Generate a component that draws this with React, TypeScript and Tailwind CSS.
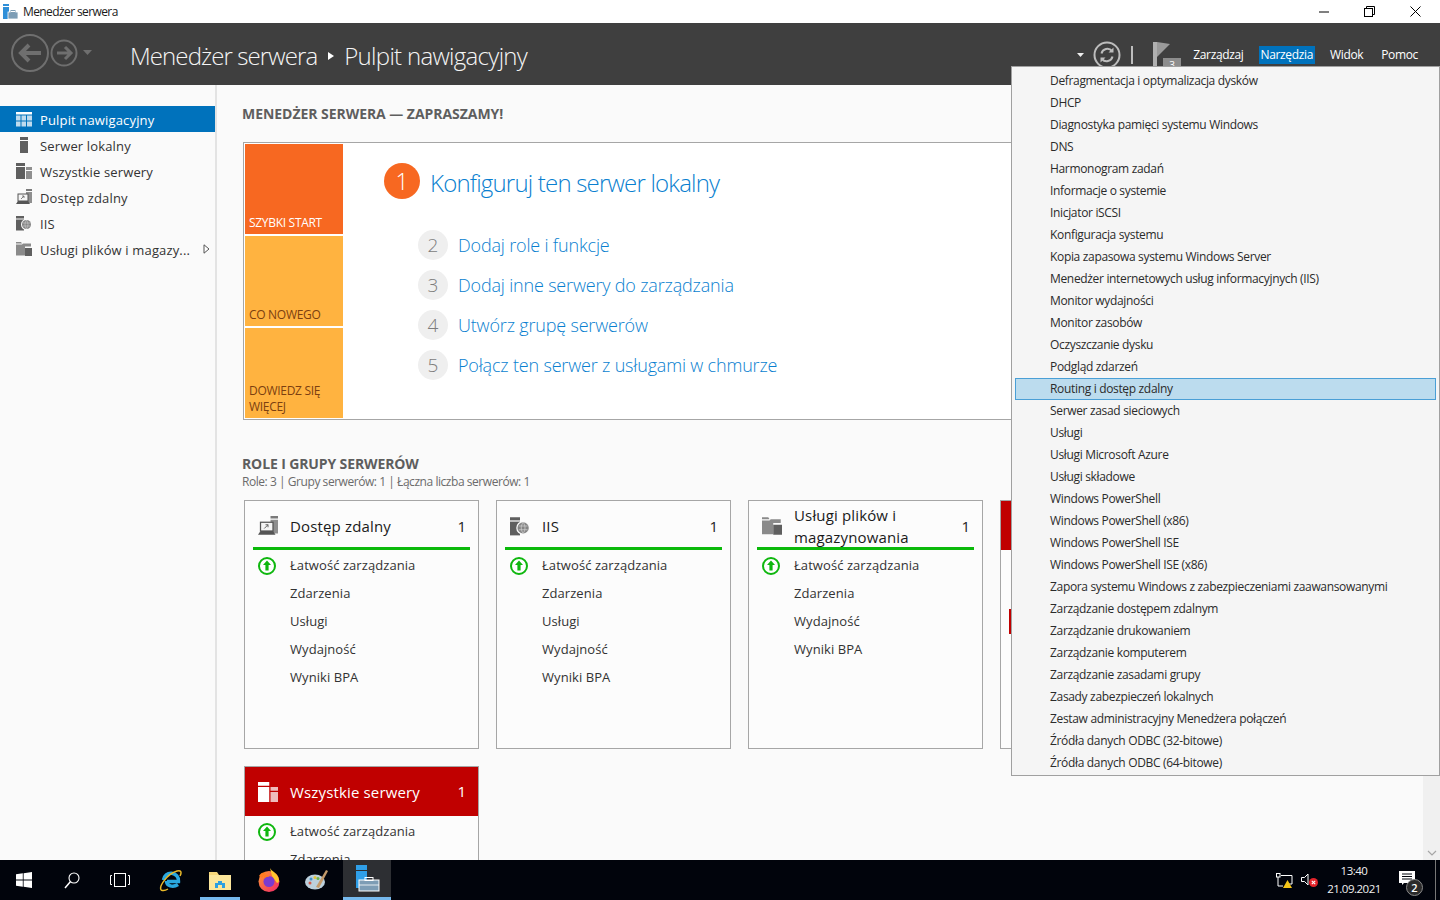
import { ReactNode } from 'react';

const menuItems = [
  'Defragmentacja i optymalizacja dysków',
  'DHCP',
  'Diagnostyka pamięci systemu Windows',
  'DNS',
  'Harmonogram zadań',
  'Informacje o systemie',
  'Inicjator iSCSI',
  'Konfiguracja systemu',
  'Kopia zapasowa systemu Windows Server',
  'Menedżer internetowych usług informacyjnych (IIS)',
  'Monitor wydajności',
  'Monitor zasobów',
  'Oczyszczanie dysku',
  'Podgląd zdarzeń',
  'Routing i dostęp zdalny',
  'Serwer zasad sieciowych',
  'Usługi',
  'Usługi Microsoft Azure',
  'Usługi składowe',
  'Windows PowerShell',
  'Windows PowerShell (x86)',
  'Windows PowerShell ISE',
  'Windows PowerShell ISE (x86)',
  'Zapora systemu Windows z zabezpieczeniami zaawansowanymi',
  'Zarządzanie dostępem zdalnym',
  'Zarządzanie drukowaniem',
  'Zarządzanie komputerem',
  'Zarządzanie zasadami grupy',
  'Zasady zabezpieczeń lokalnych',
  'Zestaw administracyjny Menedżera połączeń',
  'Źródła danych ODBC (32-bitowe)',
  'Źródła danych ODBC (64-bitowe)',
];

/* role icons */
function DashIcon() {
  return (
    <svg width="16" height="15" viewBox="0 0 16 15" fill="currentColor">
      <rect x="0" y="0" width="16" height="2.500" />
      <rect x="0" y="3.500" width="4.500" height="5" opacity=".75" />
      <rect x="5.500" y="3.500" width="4.500" height="5" opacity=".75" />
      <rect x="11" y="3.500" width="5" height="5" opacity=".75" />
      <rect x="0" y="9.500" width="4.500" height="5" opacity=".75" />
      <rect x="5.500" y="9.500" width="4.500" height="5" opacity=".75" />
      <rect x="11" y="9.500" width="5" height="5" opacity=".75" />
    </svg>
  );
}

function LocalIcon({ h = 16 }: { h?: number }) {
  return (
    <svg width={h / 2} height={h} viewBox="0 0 8 16" fill="#5f5f5f">
      <rect x="0" y="0" width="8" height="3" />
      <rect x="0" y="4" width="8" height="12" />
    </svg>
  );
}

function AllIcon({ main = '#5f5f5f', side = '#8f8f8f', size = 16 }: { main?: string; side?: string; size?: number }) {
  return (
    <svg width={size} height={size} viewBox="0 0 16 16">
      <rect x="0" y="0" width="9" height="3" fill={main} />
      <rect x="0" y="4" width="9" height="12" fill={main} />
      <rect x="10" y="4" width="6" height="3" fill={side} />
      <rect x="10" y="8" width="6" height="8" fill={side} />
    </svg>
  );
}

function RemoteIcon({ size = 16 }: { size?: number }) {
  return (
    <svg width={size} height={size} viewBox="0 0 16 16">
      <rect x="10" y="0" width="6" height="2" fill="#7a7a7a" />
      <rect x="10" y="3" width="6" height="11" fill="#8f8f8f" />
      <rect x="2" y="5" width="10" height="7" fill="#f5f5f5" stroke="#555" />
      <path d="M5 10l3-3M6 7h2v2" stroke="#666" strokeWidth=".8" fill="none" />
      <path d="M0 15l2-3h10l2 3z" fill="#555" />
    </svg>
  );
}

function IisIcon({ size = 16 }: { size?: number }) {
  return (
    <svg width={size} height={size} viewBox="0 0 16 16">
      <rect x="0" y="1" width="8" height="2.500" fill="#5f5f5f" />
      <rect x="0" y="4.500" width="8" height="11" fill="#5f5f5f" />
      <circle cx="10.500" cy="9.500" r="5.500" fill="#fafafa" />
      <circle cx="10.500" cy="9.500" r="4.500" fill="#858585" />
      <path d="M7 8h7M7 11h7M10.500 5c-2 3-2 6 0 9M10.500 5c2 3 2 6 0 9" stroke="#d0d0d0" strokeWidth=".6" fill="none" />
    </svg>
  );
}

function FilesIcon({ size = 16 }: { size?: number }) {
  return (
    <svg width={size} height={size} viewBox="0 0 16 16">
      <path d="M0 1h5l1 1.500H0z" fill="#8a8a8a" />
      <path d="M0 3.500h6l1-1h8v3H9v9H0z" fill="#8a8a8a" />
      <rect x="9" y="7" width="7" height="8" fill="#5f5f5f" />
    </svg>
  );
}

function UpStatus() {
  return (
    <svg width="20" height="20" viewBox="0 0 20 20">
      <circle cx="10" cy="10" r="8" fill="#fff" stroke="#0fb70f" strokeWidth="2" />
      <path d="M10 4.500l4 4.500h-2.400v5.500H8.400V9H6z" fill="#0fb70f" />
    </svg>
  );
}

function Sidebar() {
  const items: { label: string; icon: ReactNode; active?: boolean; arrow?: boolean }[] = [
    { label: 'Pulpit nawigacyjny', icon: <DashIcon />, active: true },
    { label: 'Serwer lokalny', icon: <LocalIcon /> },
    { label: 'Wszystkie serwery', icon: <AllIcon /> },
    { label: 'Dostęp zdalny', icon: <RemoteIcon /> },
    { label: 'IIS', icon: <IisIcon /> },
    { label: 'Usługi plików i magazy...', icon: <FilesIcon />, arrow: true },
  ];
  return (
    <div className="w-[217px] shrink-0 border-r-2 border-[#e3e3e3] pt-[21px]">
      {items.map(it => (
        <div
          key={it.label}
          className={`h-[26px] flex items-center text-[13px] tracking-[0.15px] ${it.active ? 'bg-[#0072bc] text-white' : 'text-[#333]'}`}
        >
          <span className="w-[16px] ml-4 flex justify-center">{it.icon}</span>
          <span className="ml-2 pt-[4px]">{it.label}</span>
          {it.arrow && (
            <svg className="ml-auto mr-[5px]" width="7" height="10" viewBox="0 0 7 10">
              <path d="M1 .8L6 5L1 9.200z" fill="#fff" stroke="#555" />
            </svg>
          )}
        </div>
      ))}
    </div>
  );
}

function Step({ n, text }: { n: number; text: string }) {
  return (
    <div className="h-[40px] flex items-center">
      <span className="w-[30px] h-[30px] rounded-full bg-[#efefef] text-[#7c7c7c] text-[19px] font-light flex items-center justify-center">
        {n}
      </span>
      <span className="ml-[10px] text-[18px] font-light text-[#0a7fd0] tracking-[-0.18px]">{text}</span>
    </div>
  );
}

function WelcomeBox() {
  return (
    <div className="mt-[19px] ml-px w-[1150px] h-[278px] border border-[#a6a6a6] bg-white p-px flex">
      <div className="w-[98px] flex flex-col gap-[2px] text-[12px] tracking-[-0.3px] leading-[16px]">
        <div className="h-[90px] bg-[#f76821] text-white flex items-end px-1 pb-[3px]">SZYBKI START</div>
        <div className="h-[90px] bg-[#ffb340] text-[#7c3f10] flex items-end px-1 pb-[3px]">CO NOWEGO</div>
        <div className="h-[90px] bg-[#ffb340] text-[#7c3f10] flex items-end px-1 pb-[3px]">
          <span>DOWIEDZ SIĘ WIĘCEJ</span>
        </div>
      </div>
      <div className="ml-[41px] pt-[19px]">
        <div className="flex items-center h-[36px]">
          <span className="w-[36px] h-[36px] rounded-full bg-[#f76821] text-white text-[23px] font-light flex items-center justify-center">
            1
          </span>
          <span className="ml-[10px] pt-[3px] text-[24px] font-light text-[#0a7fd0] tracking-[-0.8px]">
            Konfiguruj ten serwer lokalny
          </span>
        </div>
        <div className="ml-[34px] mt-[26px]">
          <Step n={2} text="Dodaj role i funkcje" />
          <Step n={3} text="Dodaj inne serwery do zarządzania" />
          <Step n={4} text="Utwórz grupę serwerów" />
          <Step n={5} text="Połącz ten serwer z usługami w chmurze" />
        </div>
      </div>
    </div>
  );
}

type Role = {
  title: ReactNode;
  icon: ReactNode;
  rows: string[];
  red?: boolean;
  redRow?: string;
};

function RoleCard({ role }: { role: Role }) {
  return (
    <div className="w-[235px] h-[249px] border border-[#a6a6a6] bg-[#fcfcfc] shrink-0">
      <div className={`px-[13px] flex items-center ${role.red ? 'bg-[#c00000] text-white h-[49px]' : 'text-[#1a1a1a] pt-[4px] h-[46px]'}`}>
        <span className="w-[20px] flex justify-center shrink-0">{role.icon}</span>
        <span className="ml-[12px] text-[15px] leading-[22px] tracking-[0.15px] flex-1">{role.title}</span>
        <span className="text-[15px] ml-2 mr-[-1px]">1</span>
      </div>
      {!role.red && <div className="mx-[8px] h-[3px] bg-[#0ab90a]" />}
      <div className="pt-[2px]">
        {role.rows.map((r, i) => (
          <div key={r} className="h-[28px] flex items-center text-[13px] tracking-[0.07px] text-[#333] relative">
            {r === role.redRow && <span className="absolute left-2 top-[1px] w-[3px] h-[25px] bg-[#c00000]" />}
            <span className="w-[45px] flex pl-[12px] shrink-0">{i === 0 && <UpStatus />}</span>
            <span>{r}</span>
          </div>
        ))}
      </div>
    </div>
  );
}

const fullRows = ['Łatwość zarządzania', 'Zdarzenia', 'Usługi', 'Wydajność', 'Wyniki BPA'];

const roles: Role[] = [
  { title: 'Dostęp zdalny', icon: <RemoteIcon size={20} />, rows: fullRows },
  { title: 'IIS', icon: <IisIcon size={20} />, rows: fullRows },
  { title: <>Usługi plików i<br />magazynowania</>, icon: <FilesIcon size={20} />, rows: ['Łatwość zarządzania', 'Zdarzenia', 'Wydajność', 'Wyniki BPA'] },
  { title: 'Serwer lokalny', icon: <LocalIcon h={20} />, rows: fullRows, red: true, redRow: 'Usługi' },
  { title: 'Wszystkie serwery', icon: <AllIcon main="#fff" side="#eebcbc" size={20} />, rows: fullRows, red: true },
];

function ToolsMenu() {
  return (
    <div className="absolute left-[1011px] top-[66px] w-[429px] h-[710px] border border-[#a0a0a0] bg-[#f5f5f5] pt-[3px] px-[3px] z-20 text-[12px] tracking-[-0.33px] text-[#2b2b2b]">
      {menuItems.map(m => (
        <div
          key={m}
          className={`h-[22px] pl-[34px] flex items-center border ${m === 'Routing i dostęp zdalny' ? 'bg-[#bcdcee] border-[#4a9fd6]' : 'border-transparent'}`}
        >
          {m}
        </div>
      ))}
    </div>
  );
}

function TitleBar() {
  return (
    <div className="h-[23px] bg-white flex items-center shrink-0 text-[12px] tracking-[-0.6px] text-[#1a1a1a]">
      <svg className="ml-[3px]" width="15" height="16" viewBox="0 0 15 16">
        <rect x="0" y="0" width="6" height="2" fill="#2f8fd8" />
        <rect x="0" y="3" width="6" height="12" fill="#2f8fd8" />
        <rect x="5" y="8" width="10" height="7" fill="#7d9db5" stroke="#fff" strokeWidth=".8" />
        <rect x="8" y="6.500" width="4" height="2" fill="none" stroke="#7d9db5" />
      </svg>
      <span className="ml-[5px]">Menedżer serwera</span>
      <div className="ml-auto flex items-center pr-[19px] gap-[35px]">
        <svg width="10" height="10" viewBox="0 0 10 10"><path d="M0 5h10" stroke="#000" /></svg>
        <svg width="11" height="11" viewBox="0 0 11 11" fill="none" stroke="#000">
          <rect x=".5" y="2.500" width="8" height="8" />
          <path d="M2.500 2.500v-2h8v8h-2" />
        </svg>
        <svg width="11" height="11" viewBox="0 0 11 11"><path d="M.5.500l10 10M10.500.500l-10 10" stroke="#000" /></svg>
      </div>
    </div>
  );
}

function HeaderBar() {
  return (
    <div className="h-[62px] bg-[#3f3f3f] shrink-0 flex items-center text-white">
      <svg className="ml-[11px]" width="84" height="40" viewBox="0 0 84 40" fill="none">
        <circle cx="19" cy="19" r="18" stroke="#6f6f6f" strokeWidth="2" />
        <path d="M30 19H11M18 11l-8 8 8 8" stroke="#6f6f6f" strokeWidth="4" />
        <circle cx="53" cy="19" r="12.500" stroke="#6f6f6f" strokeWidth="2" />
        <path d="M46 19h13M54 13l6 6-6 6" stroke="#6f6f6f" strokeWidth="3" />
        <path d="M72 16h9l-4.500 5z" fill="#6f6f6f" />
      </svg>
      <div className="ml-[35px] flex items-center text-[24px] font-light tracking-[-0.9px] text-[#f5f5f5] pt-[3px]">
        <span>Menedżer serwera</span>
        <svg className="mx-[11px]" width="6" height="8" viewBox="0 0 6 8"><path d="M0 0l6 4-6 4z" fill="#fff" /></svg>
        <span className="-ml-px tracking-[-0.7px]">Pulpit nawigacyjny</span>
      </div>
      <div className="ml-auto flex items-center pr-[22px] pt-[2px] h-full text-[12px] tracking-[-0.35px]">
        <svg width="7" height="4" viewBox="0 0 7 4"><path d="M0 0h7L3.500 4z" fill="#eee" /></svg>
        <svg className="ml-[9px]" width="28" height="28" viewBox="0 0 28 28" fill="none" stroke="#bdbdbd">
          <circle cx="14" cy="14" r="12.500" strokeWidth="2" />
          <path d="M8.500 12.500a6 6 0 0 1 10.500-2.500M19.500 15.500a6 6 0 0 1-10.500 2.500" strokeWidth="2" />
          <path d="M20.500 6.500v5h-5zM7.500 21.500v-5h5z" fill="#bdbdbd" stroke="none" />
        </svg>
        <span className="ml-[10px] w-[2px] h-[18px] bg-[#bdbdbd]" />
        <svg className="ml-[20px]" width="29" height="27" viewBox="0 0 29 27">
          <rect x="0" y="0" width="4" height="26" fill="#b0b0b0" />
          <path d="M4 0L17 2L4 15z" fill="#9a9a9a" />
          <rect x="10" y="16" width="18" height="11" fill="#8d8d8d" />
          <text x="19" y="27" fontSize="10" textAnchor="middle" fill="#fff">3</text>
        </svg>
        <span className="ml-[11px]">Zarządzaj</span>
        <span className="ml-[15px] bg-[#0072bc] px-[2px] h-[18px] leading-[18px]">Narzędzia</span>
        <span className="ml-[15px]">Widok</span>
        <span className="ml-[18px]">Pomoc</span>
      </div>
    </div>
  );
}

function Taskbar() {
  const slot = 'w-[48px] h-full flex items-center justify-center shrink-0';
  return (
    <div className="h-[40px] bg-[#01040c] shrink-0 flex items-center text-white relative z-30">
      <div className={slot}>
        <svg width="16" height="16" viewBox="0 0 16 16" fill="#fff">
          <path d="M0 2.300L6.800 1.300V7.600H0zM7.600 1.200L16 0V7.600H7.600zM0 8.400H6.800V14.700L0 13.700zM7.600 8.400H16V16L7.600 14.800z" />
        </svg>
      </div>
      <div className={slot}>
        <svg width="16" height="17" viewBox="0 0 16 17" fill="none" stroke="#fff" strokeWidth="1.100">
          <circle cx="10" cy="6" r="5" />
          <path d="M6.500 9.500L1 16" strokeWidth="1.500" />
        </svg>
      </div>
      <div className={slot}>
        <svg width="20" height="14" viewBox="0 0 20 14" fill="none" stroke="#fff">
          <rect x="4.500" y=".5" width="11" height="13" />
          <path d="M2 2.500H.5v9H2M18 2.500h1.500v9H18" />
        </svg>
      </div>
      <div className={`${slot} ml-[3px]`}>
        <svg width="24" height="24" viewBox="0 0 24 24" fill="none">
          <path d="M4.500 12a7.500 7.500 0 0 1 15 1.500H8" stroke="#29a8e0" strokeWidth="3.500" />
          <path d="M7.500 13c0 5 6.500 7 11.500 3.500" stroke="#29a8e0" strokeWidth="3.500" />
          <path d="M2 22C0 18 8 6 18 3c4-1 5 1 3 5M2 22c2 1 4 1 7-1" stroke="#e9b92a" strokeWidth="1.500" />
        </svg>
      </div>
      <div className="w-[40px] h-full ml-[5px] flex items-center justify-center shrink-0 border-b-[3px] border-[#76b9ed] pt-[3px]">
        <svg width="22" height="19" viewBox="0 0 22 19">
          <path d="M0 1h8l2 3h12v15H0z" fill="#f6d77a" />
          <rect x="0" y="4" width="22" height="15" fill="#fbe69b" />
          <path d="M6 17v-5h3v-2h4v2h3v5h-3v-3H9v3z" fill="#2b9fe0" />
        </svg>
      </div>
      <div className={`${slot} ml-[5px]`}>
        <svg width="24" height="24" viewBox="0 0 24 24">
          <defs>
            <linearGradient id="fx" x1="0" y1="0" x2="1" y2="1">
              <stop offset="0" stopColor="#ff9a2e" />
              <stop offset="1" stopColor="#f0246c" />
            </linearGradient>
          </defs>
          <circle cx="12" cy="13.500" r="10.500" fill="url(#fx)" />
          <path d="M13 0c1 3 8 5 9 12 .3 2-1 3-2 3l-5-7z" fill="#ffc62e" />
          <circle cx="12" cy="13.500" r="5.500" fill="#7a3bd0" />
          <path d="M6.500 12c1-3 4-3 6-3.500-1-2-3-2-5-1.500z" fill="#ff7b1f" />
          <path d="M2 8c2-4 5-4 7-3L5 10z" fill="#ff7b1f" />
        </svg>
      </div>
      <div className={slot}>
        <svg width="24" height="24" viewBox="0 0 24 24">
          <ellipse cx="10" cy="14" rx="10" ry="7.500" fill="#bcd0dc" />
          <circle cx="6" cy="11" r="1.500" fill="#3f8fc8" />
          <circle cx="10" cy="9.500" r="1.500" fill="#e2c23a" />
          <circle cx="5" cy="15" r="1.500" fill="#d25a4a" />
          <circle cx="13" cy="10.500" r="1.500" fill="#6ab04a" />
          <path d="M11 19L21 2l2 1-9 17z" fill="#c49a6a" />
        </svg>
      </div>
      <div className="ml-[2px] w-[48px] h-full bg-[#2d2f33] border-b-[3px] border-[#76b9ed] flex items-center justify-center">
        <svg width="26" height="27" viewBox="0 0 26 27">
          <rect x="2" y="0" width="11" height="5" fill="#2f9fe8" />
          <rect x="2" y="6" width="11" height="17" fill="#2f9fe8" />
          <rect x="5" y="15" width="20" height="11" fill="#7d9db5" stroke="#fff" />
          <rect x="11" y="12.500" width="8" height="3" fill="none" stroke="#fff" />
          <path d="M5 20h20" stroke="#fff" strokeWidth=".8" />
        </svg>
      </div>

      <div className="ml-auto flex items-center h-full">
        <svg width="17" height="15" viewBox="0 0 17 15" fill="none" stroke="#fff">
          <rect x=".5" y=".5" width="3.500" height="3.500" />
          <path d="M2 4v9h5M5 2.500h11V11h-3" />
          <path d="M11.500 7l4.500 8H7z" fill="#f5c518" stroke="none" />
        </svg>
        <svg className="ml-[8px]" width="17" height="14" viewBox="0 0 17 14">
          <path d="M.5 4.500h3L7 1v11L3.500 8.500h-3z" fill="none" stroke="#fff" />
          <circle cx="12.500" cy="9.500" r="4.500" fill="#e3242b" />
          <path d="M10.800 7.800l3.400 3.400M14.200 7.800l-3.400 3.400" stroke="#fff" strokeWidth="1.100" />
        </svg>
        <div className="ml-[5px] w-[62px] text-center text-[11.500px] leading-[18px] tracking-[-0.5px] text-[#f0f0f0]">
          <div>13:40</div>
          <div>21.09.2021</div>
        </div>
        <div className="ml-[14px] w-[41px] h-full flex items-center relative">
          <svg className="mb-[5px]" width="16" height="14" viewBox="0 0 16 14">
            <path d="M0 0h16v12H5l-2 2v-2H0z" fill="#fff" />
            <path d="M3 3h10M3 5.500h10M3 8h10" stroke="#01040c" />
          </svg>
          <span className="absolute left-[7px] top-[19px] w-[17px] h-[17px] rounded-full bg-[#2b2b2b] border border-[#8a8a8a] text-[11px] font-semibold leading-[15px] text-center">2</span>
          <span className="absolute right-[4px] top-0 bottom-0 w-px bg-[#777]" />
        </div>
      </div>
    </div>
  );
}

export default function App() {
  return (
    <div className="w-[1440px] h-[900px] flex flex-col overflow-hidden relative font-['Open_Sans','Noto_Sans',sans-serif] bg-[#fafafa]">
      <TitleBar />
      <HeaderBar />
      <div className="flex-1 flex min-h-0">
        <Sidebar />
        <main className="flex-1 min-w-0 overflow-hidden pl-[25px] pt-[20px]">
          <h2 className="text-[14px] leading-[18px] font-bold text-[#5e5e5e] tracking-[-0.05px]">MENEDŻER SERWERA — ZAPRASZAMY!</h2>
          <WelcomeBox />
          <h2 className="mt-[35px] text-[14px] leading-[18px] font-bold text-[#5e5e5e] tracking-[-0.12px]">ROLE I GRUPY SERWERÓW</h2>
          <p className="pt-px text-[12px] leading-[16px] text-[#6b6b6b] tracking-[-0.45px]">Role: 3 | Grupy serwerów: 1 | Łączna liczba serwerów: 1</p>
          <div className="mt-[10px] ml-[2px] flex flex-wrap gap-x-[17px] gap-y-[17px] w-[1180px]">
            {roles.map((r, i) => (
              <RoleCard key={i} role={r} />
            ))}
          </div>
        </main>
        <div className="w-[17px] shrink-0 bg-[#f0f0f0] flex items-end justify-center pb-[4px]">
          <svg width="10" height="6" viewBox="0 0 10 6" fill="none"><path d="M1 1l4 4 4-4" stroke="#a6a6a6" strokeWidth="1.200" /></svg>
        </div>
      </div>
      <Taskbar />
      <ToolsMenu />
    </div>
  );
}
